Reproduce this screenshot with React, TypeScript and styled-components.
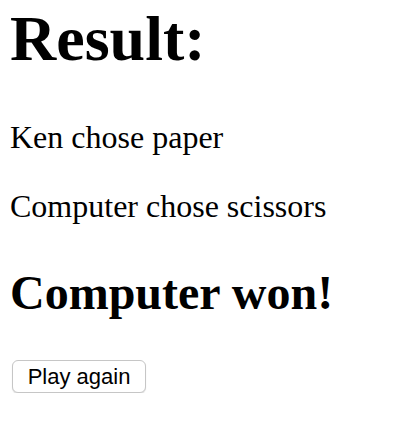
import React from "react";
import styled, { createGlobalStyle } from "styled-components";

const Global = createGlobalStyle`
  html, body { margin: 0; padding: 0; background: #fff; }
  body { font-family: "Liberation Serif", "Times New Roman", serif; color: #000; }
`;

const Page = styled.div`
  padding: 2px 10px 0;
  font-size: 32px;
`;

const Title = styled.h1`
  margin: 0 0 43px;
  font-size: 64px;
  font-weight: bold;
  line-height: normal;
`;

const Line = styled.p`
  margin: 0 0 32px;
  font-size: 32px;
  line-height: normal;
  &:last-of-type { margin-bottom: 40px; }
`;

const Outcome = styled.h2`
  margin: 0 0 40px;
  font-size: 48px;
  font-weight: bold;
  line-height: normal;
`;

const Button = styled.button`
  display: flex;
  align-items: center;
  justify-content: center;
  width: 134px;
  height: 33px;
  margin-left: 2px;
  padding: 0;
  font-family: "Liberation Sans", Arial, sans-serif;
  font-size: 22px;
  color: #000;
  background: #fff;
  border: 1px solid #c6c6c6;
  border-radius: 6px;
  box-shadow: 0 1px 1px rgba(0, 0, 0, 0.12);
`;

export default function App() {
  return (
    <>
      <Global />
      <Page>
        <Title>Result:</Title>
        <Line>Ken chose paper</Line>
        <Line>Computer chose scissors</Line>
        <Outcome>Computer won!</Outcome>
        <Button>Play again</Button>
      </Page>
    </>
  );
}
